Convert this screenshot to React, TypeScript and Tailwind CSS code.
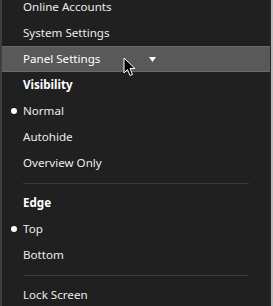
import React from "react";

function Row({ label, bold, dot }: { label: string; bold?: boolean; dot?: boolean }) {
  return (
    <div className="relative flex h-[26px] items-center pl-[21px]">
      {dot && <span className="absolute left-[9px] top-[10px] h-[6px] w-[6px] rounded-full bg-white" />}
      <span className={bold ? "font-bold text-white" : "text-[#ececec]"}>{label}</span>
    </div>
  );
}

function Sep() {
  return (
    <div className="flex h-[14px] items-center pl-[21px] pr-[21px]">
      <div className="h-px w-full bg-[#3a3a3a]" />
    </div>
  );
}

export default function App() {
  return (
    <div
      className="flex h-[306px] w-[273px] overflow-hidden bg-[#202020] text-[11.6px]"
      style={{ fontFamily: '"Noto Sans", "Open Sans", sans-serif' }}
    >
      <div className="w-[2px] bg-[#3e3e3e]" />
      <div className="flex-1 -mt-[6px]">
        <Row label="Online Accounts" />
        <Row label="System Settings" />
        <div className="relative flex h-[26px] items-center border-y border-[#6a6a6a] bg-[#595959] pl-[21px] text-white">
          <span>Panel Settings</span>
          <svg className="absolute left-[147px] top-[10px]" width="7" height="5" viewBox="0 0 7 5">
            <path d="M0 0 L7 0 L3.5 5 Z" fill="#ffffff" />
          </svg>
          <svg className="absolute left-[121px] top-[10px]" width="13" height="20" viewBox="0 0 13 20">
            <path
              d="M1 1 L1 16 L4.5 12.5 L7 18.5 L9.5 17.5 L7 11.5 L12 11.5 Z"
              fill="#000000"
              stroke="#ffffff"
              strokeWidth="1"
              strokeLinejoin="miter"
            />
          </svg>
        </div>
        <Row label="Visibility" bold />
        <Row label="Normal" dot />
        <Row label="Autohide" />
        <Row label="Overview Only" />
        <Sep />
        <Row label="Edge" bold />
        <Row label="Top" dot />
        <Row label="Bottom" />
        <Sep />
        <Row label="Lock Screen" />
      </div>
      <div className="w-px bg-[#2a2a2a]" />
      <div className="w-[2px] bg-[#bdbdbd]" />
    </div>
  );
}
